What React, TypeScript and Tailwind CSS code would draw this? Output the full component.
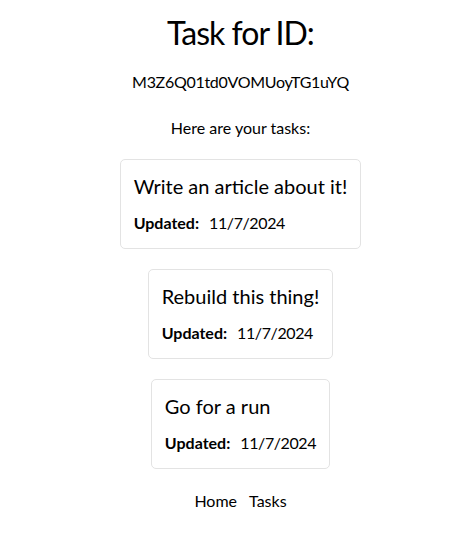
// Task list for a single user id — title, id, task cards, footer nav.

const TASKS = [
  { title: 'Write an article about it!', updated: '11/7/2024' },
  { title: 'Rebuild this thing!', updated: '11/7/2024' },
  { title: 'Go for a run', updated: '11/7/2024' },
];

export default function App() {
  return (
    <div className="flex flex-col items-center pl-[13px] text-black font-['Lato',sans-serif]">
      <h1 className="mt-[11px] text-[32px] leading-[43px] tracking-[-1px]">Task for ID:</h1>
      <p className="mt-[17px] text-[16px] leading-[21px] tracking-[-0.3px]">M3Z6Q01td0VOMUoyTG1uYQ</p>
      <p className="mt-[25px] text-[16px] leading-[21px]">Here are your tasks:</p>

      <ul className="mt-[21px] flex flex-col items-center gap-[20px]">
        {TASKS.map((t, i) => (
          <li
            key={i}
            className="rounded-[5px] border border-[#e3e3e3] px-[13px] pt-[13px] pb-[14px]"
          >
            <h2 className="text-[20px] leading-[27px]">{t.title}</h2>
            <p className="mt-[12px] text-[16px] leading-[22px]">
              <span className="mr-[10px] font-bold">Updated:</span>
              <span className="tracking-[-0.4px]">{t.updated}</span>
            </p>
          </li>
        ))}
      </ul>

      <nav className="mt-[21px] flex gap-[12px] text-[16px] leading-[21px]">
        <a href="#">Home</a>
        <a href="#">Tasks</a>
      </nav>
    </div>
  );
}
